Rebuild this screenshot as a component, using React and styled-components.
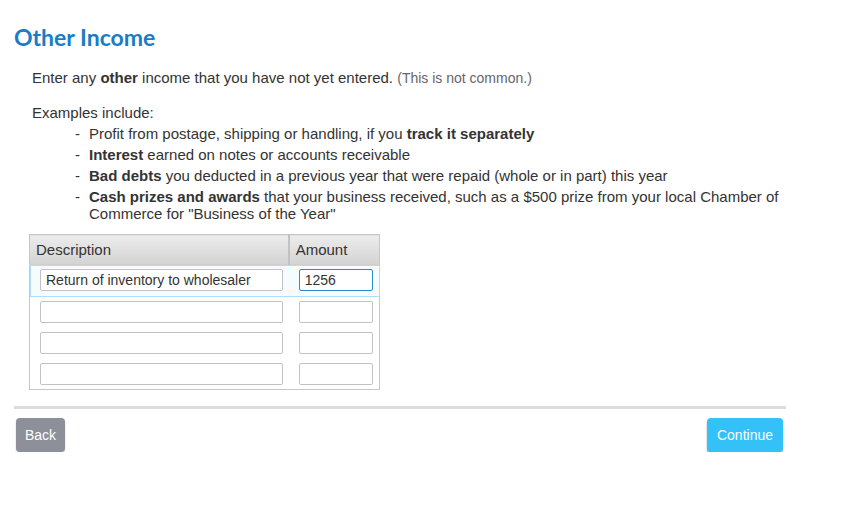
import { useState } from 'react';
import styled, { createGlobalStyle } from 'styled-components';

const Global = createGlobalStyle`
    body {
        margin: 0;
        background: #fff;
        font-family: "Liberation Sans", Arial, sans-serif;
        color: #333;
    }
`

const Page = styled.div`
    width: 772px;
    padding: 23px 0 0 14px;
`

const Title = styled.h1`
    margin: 0;
    font-family: Lato, "Open Sans", sans-serif;
    font-weight: 700;
    font-size: 23px;
    line-height: 29px;
    color: #1b7cc5;
`

const Content = styled.div`
    padding-left: 18px;
    font-size: 15px;
    line-height: 17px;
`

const Intro = styled.p`
    margin: 17px 0 0;
`

const Note = styled.span`
    font-size: 14px;
    color: #666;
`

const Lead = styled.p`
    margin: 17px 0 0;
`

const List = styled.ul`
    list-style: none;
    margin: 4px 0 0;
    padding: 0 0 0 57px;
    width: 700px;
`

const Item = styled.li`
    position: relative;
    margin-bottom: 4px;

    &::before {
        content: "-";
        position: absolute;
        left: -14px;
    }
`

const Grid = styled.table`
    margin: 12px 0 0 15px;
    width: 351px;
    border: 1px solid #c6c6c6;
    border-collapse: collapse;
    font-size: 15px;
`

const Head = styled.th`
    height: 29px;
    padding: 0 6px;
    text-align: left;
    font-weight: 400;
    color: #333;
    background: linear-gradient(#ececec, #d3d3d3);
    border-right: ${p => p.$last ? 'none' : '2px solid #c2c2c2'};
    border-bottom: 1px solid #cfcfcf;
    width: ${p => p.$w}px;
`

const Row = styled.tr`
    background: ${p => p.$active ? '#f6fbfe' : '#fff'};
    outline: ${p => p.$active ? '1px solid #ade0f6' : 'none'};
    outline-offset: -1px;
`

const Cell = styled.td`
    height: ${p => p.$h}px;
    padding: 4px 0 0 ${p => p.$pad}px;
    box-sizing: border-box;
    vertical-align: top;
`

const Field = styled.input`
    box-sizing: border-box;
    display: block;
    width: ${p => p.$w}px;
    height: 22px;
    padding: 0 5px;
    border: 1px solid ${p => p.$focus ? '#2a8cd3' : '#c3c3c3'};
    border-radius: 2px;
    font-family: "Liberation Sans", Arial, sans-serif;
    font-size: 14px;
    color: #333;
    outline: none;
`

const Rule = styled.div`
    margin-top: 16px;
    height: 3px;
    background: #dcdcdc;
`

const Footer = styled.div`
    display: flex;
    justify-content: space-between;
    padding: 9px 3px 0 2px;
`

const Button = styled.button`
    height: 34px;
    padding: 0 ${p => p.$pad}px;
    border: none;
    border-radius: 4px;
    font-family: "Liberation Sans", Arial, sans-serif;
    font-size: 14px;
    color: #fff;
    background: ${p => p.$primary ? '#34c1f8' : '#8d9099'};
    box-shadow: ${p => p.$primary ? '0 2px 2px rgba(0,0,0,0.35)' : '0 1px 2px rgba(0,0,0,0.2)'};
`

function App() {
    const [rows] = useState([
        { desc: 'Return of inventory to wholesaler', amount: '1256' },
        { desc: '', amount: '' },
        { desc: '', amount: '' },
        { desc: '', amount: '' }
    ]);

    return (
        <Page>
            <Global />
            <Title>Other Income</Title>
            <Content>
                <Intro>
                    Enter any <b>other</b> income that you have not yet entered. <Note>(This is not common.)</Note>
                </Intro>
                <Lead>Examples include:</Lead>
                <List>
                    <Item>Profit from postage, shipping or handling, if you <b>track it separately</b></Item>
                    <Item><b>Interest</b> earned on notes or accounts receivable</Item>
                    <Item><b>Bad debts</b> you deducted in a previous year that were repaid (whole or in part) this year</Item>
                    <Item><b>Cash prizes and awards</b> that your business received, such as a $500 prize from your local Chamber of Commerce for "Business of the Year"</Item>
                </List>
            </Content>
            <Grid>
                <thead>
                    <tr>
                        <Head $w={259}>Description</Head>
                        <Head $w={92} $last>Amount</Head>
                    </tr>
                </thead>
                <tbody>
                    {rows.map((r, i) => (
                        <Row key={i} $active={i === 0}>
                            <Cell $pad={10} $h={i === 0 ? 32 : 31}>
                                <Field $w={243} defaultValue={r.desc} />
                            </Cell>
                            <Cell $pad={10} $h={i === 0 ? 32 : 31}>
                                <Field $w={74} $focus={i === 0} defaultValue={r.amount} />
                            </Cell>
                        </Row>
                    ))}
                </tbody>
            </Grid>
            <Rule />
            <Footer>
                <Button type="button" $pad={9}>Back</Button>
                <Button type="button" $primary $pad={10}>Continue</Button>
            </Footer>
        </Page>
    )
}

export default App;
